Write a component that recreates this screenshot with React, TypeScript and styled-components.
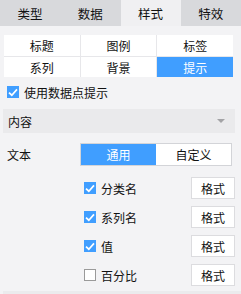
import React from "react";
import styled, { createGlobalStyle } from "styled-components";

const Global = createGlobalStyle`
  html, body { margin: 0; padding: 0; background: #f3f3f5; }
  body { font-family: "Noto Sans CJK SC", "Noto Sans", sans-serif; font-size: 12px; color: #111; }
  * { box-sizing: border-box; }
`;

const Panel = styled.div`
  width: 241px;
  height: 294px;
  overflow: hidden;
  background: #f3f3f5;
`;

const TabBar = styled.div`
  display: grid;
  grid-template-columns: repeat(4, 1fr);
  height: 26px;
  background: #d8d9dc;
`;

const Tab = styled.div<{ $active?: boolean }>`
  display: flex;
  align-items: center;
  justify-content: center;
  font-size: 12.5px;
  color: #111;
  background: ${(p) => (p.$active ? "#f0f0f2" : "transparent")};
`;

const SubGrid = styled.div`
  margin: 9px 8px 0 4px;
  display: grid;
  grid-template-columns: repeat(3, 1fr);
  grid-template-rows: 21px 20px;
  gap: 1px;
  background: #e7e7ea;
`;

const SubTab = styled.div<{ $active?: boolean }>`
  display: flex;
  align-items: center;
  justify-content: center;
  background: ${(p) => (p.$active ? "#409eff" : "#ffffff")};
  color: ${(p) => (p.$active ? "#ffffff" : "#111")};
`;

const CheckRow = styled.label`
  display: flex;
  align-items: center;
  gap: 5px;
  height: 20px;
  margin: 5px 0 0 7px;
`;

const Box = styled.span<{ $checked?: boolean }>`
  width: 12px;
  height: 12px;
  flex: none;
  display: flex;
  align-items: center;
  justify-content: center;
  background: ${(p) => (p.$checked ? "#409eff" : "#ffffff")};
  border: 1px solid ${(p) => (p.$checked ? "#409eff" : "#9a9a9a")};
`;

const Dropdown = styled.div`
  margin: 7px 6px 0 3px;
  height: 24px;
  background: #eaeaec;
  display: flex;
  align-items: center;
  justify-content: space-between;
  padding: 0 10px 0 5px;
`;

const Caret = styled.span`
  width: 0;
  height: 0;
  border-left: 4px solid transparent;
  border-right: 4px solid transparent;
  border-top: 4px solid #a3a3a6;
`;

const FieldRow = styled.div`
  display: flex;
  align-items: center;
  margin: 10px 9px 0 7px;
  height: 23px;
`;

const FieldLabel = styled.span`
  width: 73px;
`;

const Segment = styled.div`
  flex: 1;
  height: 23px;
  display: grid;
  grid-template-columns: 1fr 1fr;
  border: 1px solid #d3d4d8;
  background: #fff;
`;

const SegItem = styled.div<{ $active?: boolean }>`
  display: flex;
  align-items: center;
  justify-content: center;
  background: ${(p) => (p.$active ? "#409eff" : "#ffffff")};
  color: ${(p) => (p.$active ? "#ffffff" : "#111")};
`;

const List = styled.div`
  display: flex;
  flex-direction: column;
  gap: 7px;
  margin: 11px 6px 0 84px;
`;

const ItemRow = styled.div`
  display: flex;
  align-items: center;
  justify-content: space-between;
  height: 22px;
`;

const ItemLabel = styled.span`
  display: flex;
  align-items: center;
  gap: 5px;
`;

const FmtButton = styled.button`
  width: 44px;
  height: 22px;
  border: 1px solid #dcdcdf;
  background: #fff;
  font-family: inherit;
  font-size: 12px;
  color: #111;
  padding: 0;
`;

const Footer = styled.div`
  margin: 5px 0 0 3px;
  height: 6px;
  background: #ebebed;
`;

const Check = ({ checked }: { checked?: boolean }) => (
  <Box $checked={checked}>
    {checked && (
      <svg width="10" height="9" viewBox="0 0 10 9">
        <path d="M1 4.6 L3.8 7.2 L9 1.4" stroke="#fff" strokeWidth="1.7" fill="none" />
      </svg>
    )}
  </Box>
);

const items = [
  { label: "分类名", checked: true },
  { label: "系列名", checked: true },
  { label: "值", checked: true },
  { label: "百分比", checked: false },
];

export default function App() {
  return (
    <Panel>
      <Global />
      <TabBar>
        <Tab>类型</Tab>
        <Tab>数据</Tab>
        <Tab $active>样式</Tab>
        <Tab>特效</Tab>
      </TabBar>
      <SubGrid>
        <SubTab>标题</SubTab>
        <SubTab>图例</SubTab>
        <SubTab>标签</SubTab>
        <SubTab>系列</SubTab>
        <SubTab>背景</SubTab>
        <SubTab $active>提示</SubTab>
      </SubGrid>
      <CheckRow>
        <Check checked />
        使用数据点提示
      </CheckRow>
      <Dropdown>
        <span>内容</span>
        <Caret />
      </Dropdown>
      <FieldRow>
        <FieldLabel>文本</FieldLabel>
        <Segment>
          <SegItem $active>通用</SegItem>
          <SegItem>自定义</SegItem>
        </Segment>
      </FieldRow>
      <List>
        {items.map((it) => (
          <ItemRow key={it.label}>
            <ItemLabel>
              <Check checked={it.checked} />
              {it.label}
            </ItemLabel>
            <FmtButton>格式</FmtButton>
          </ItemRow>
        ))}
      </List>
      <Footer />
    </Panel>
  );
}
